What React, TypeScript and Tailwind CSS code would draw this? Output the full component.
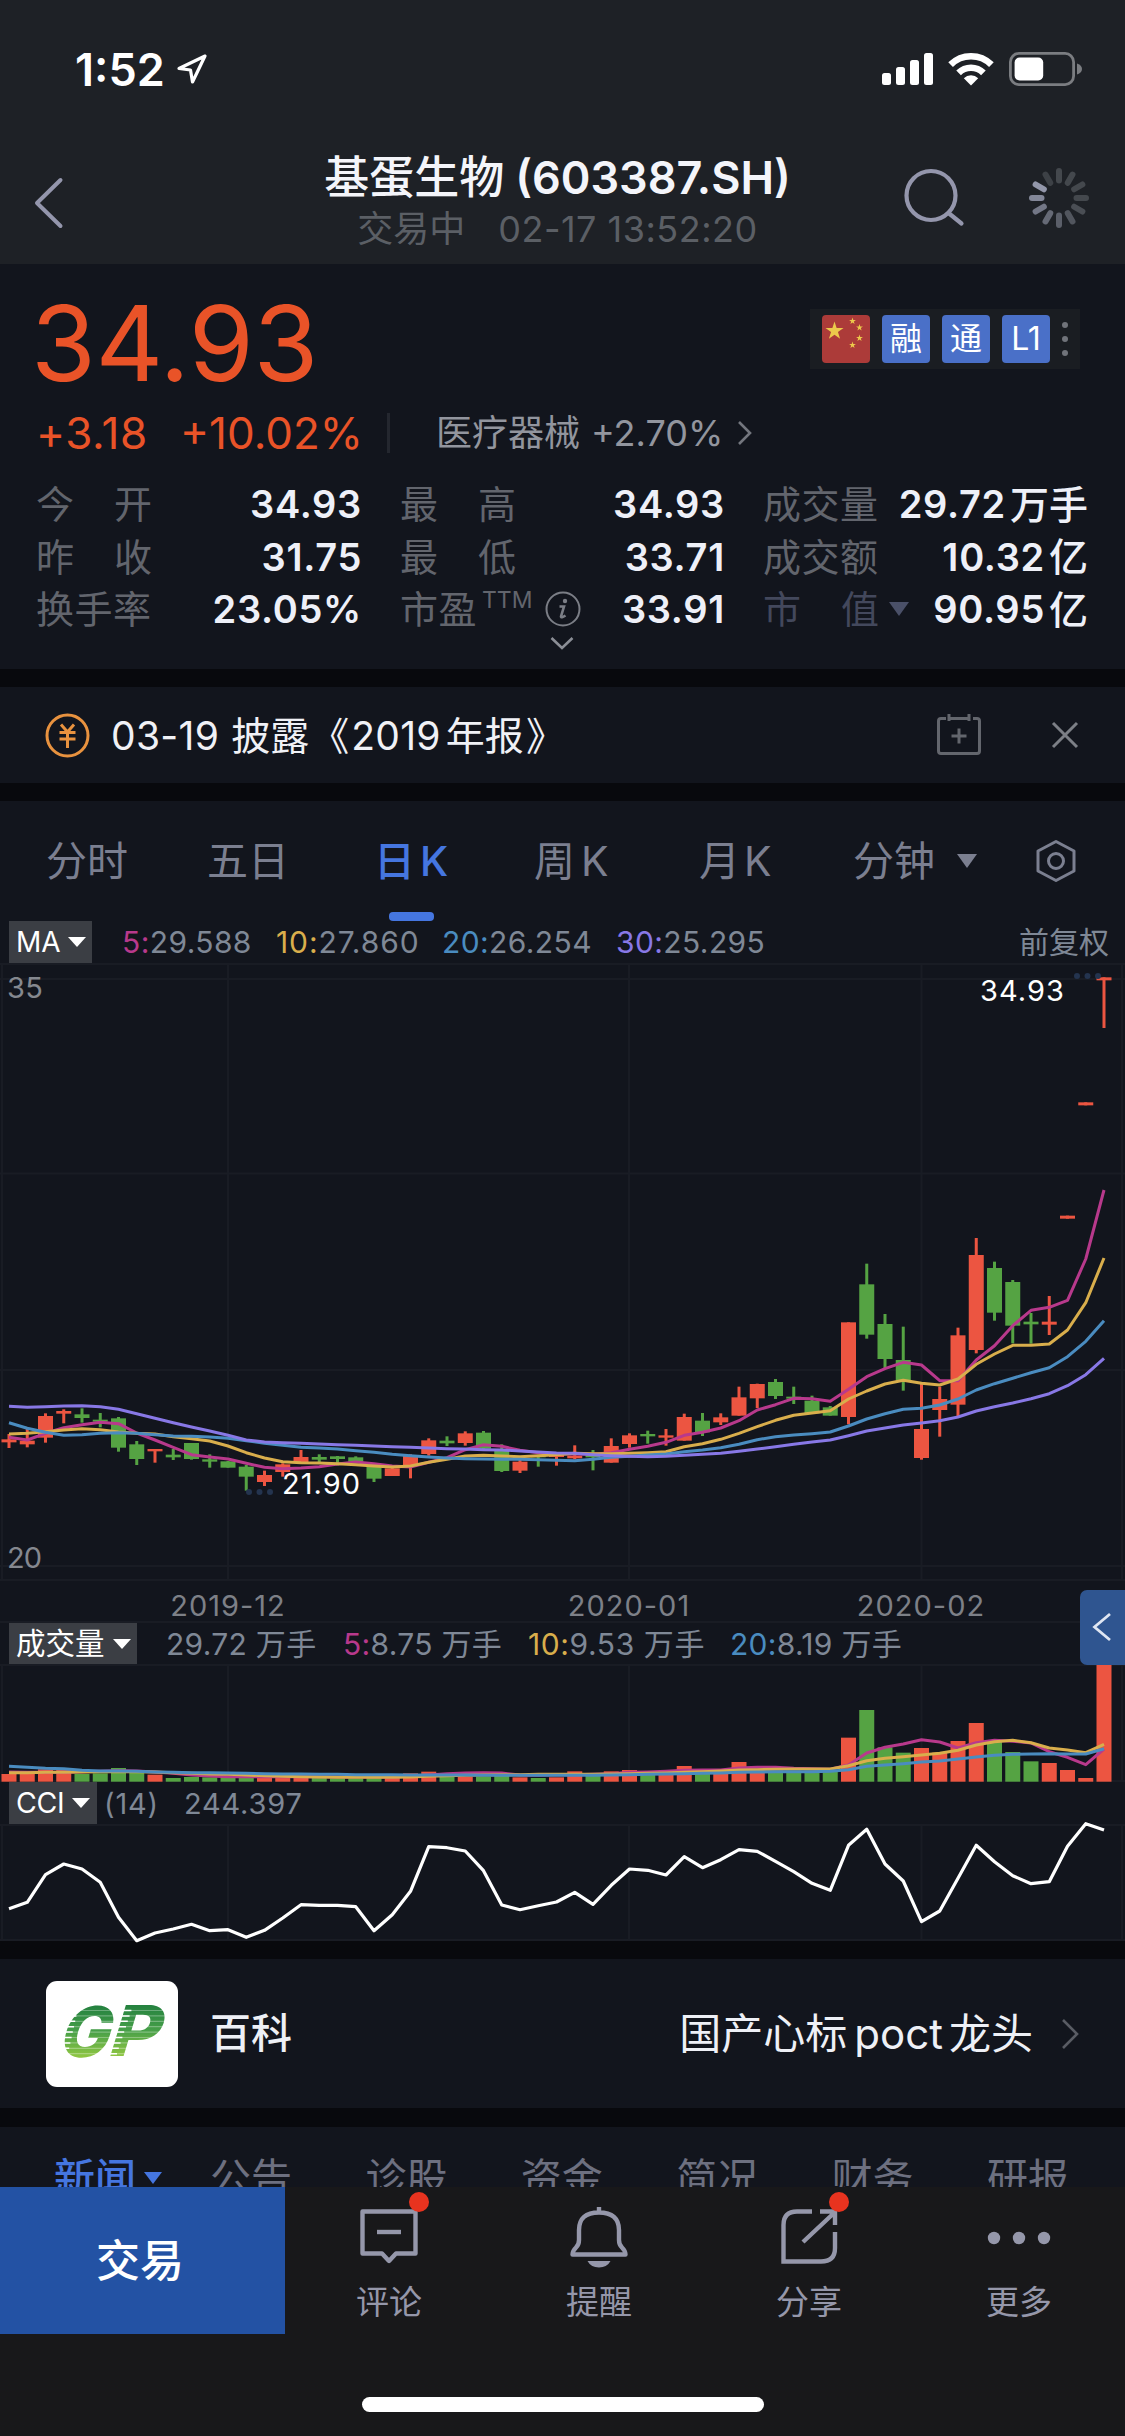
import React from "react";

const FONT = "font-['Inter','Noto_Sans_CJK_SC',sans-serif]";

const RED = "#ec5541";
const GREEN = "#55a343";
const MAGENTA = "#b8398c";
const YELLOW = "#d9ae4c";
const BLUE = "#4a8cc0";
const VIOLET = "#8878e6";

// one trading day every 18.25px
const STEP = 18.25;
const cx = (i: number) => 9 + i * STEP;

// [direction, high, body top, body bottom, low], thirds of a pixel
type Candle = ["r" | "g", number, number, number, number];

const CANDLES: Candle[] = [
  ["r", 312, 328, 337, 354],
  ["r", 292, 332, 343, 352],
  ["r", 250, 258, 323, 338],
  ["r", 238, 243, 251, 280],
  ["g", 235, 253, 264, 278],
  ["g", 249, 269, 275, 292],
  ["g", 261, 265, 353, 365],
  ["g", 333, 343, 387, 405],
  ["r", 357, 357, 364, 398],
  ["g", 357, 374, 382, 390],
  ["g", 339, 339, 387, 389],
  ["g", 373, 388, 395, 413],
  ["g", 393, 394, 413, 413],
  ["g", 405, 410, 440, 482],
  ["r", 422, 435, 456, 468],
  ["r", 400, 403, 426, 440],
  ["r", 360, 381, 396, 396],
  ["g", 373, 381, 389, 397],
  ["g", 378, 379, 387, 406],
  ["g", 379, 382, 395, 395],
  ["g", 410, 411, 446, 456],
  ["r", 414, 415, 438, 438],
  ["r", 373, 375, 408, 445],
  ["r", 325, 331, 372, 377],
  ["g", 319, 332, 340, 348],
  ["r", 304, 310, 339, 347],
  ["g", 303, 308, 356, 360],
  ["g", 343, 360, 423, 426],
  ["r", 390, 395, 422, 429],
  ["g", 375, 377, 382, 410],
  ["r", 374, 375, 381, 407],
  ["r", 346, 377, 385, 388],
  ["g", 360, 376, 382, 421],
  ["r", 325, 348, 398, 398],
  ["r", 310, 316, 342, 353],
  ["g", 302, 312, 319, 341],
  ["r", 297, 316, 323, 347],
  ["r", 251, 261, 332, 332],
  ["g", 249, 272, 307, 318],
  ["r", 250, 262, 277, 285],
  ["r", 170, 202, 257, 257],
  ["r", 161, 162, 205, 234],
  ["g", 147, 156, 198, 207],
  ["g", 170, 200, 206, 222],
  ["g", 197, 212, 250, 250],
  ["g", 228, 232, 257, 257],
  ["r", -23, -23, 261, 283],
  ["g", -199, -137, 14, 26],
  ["g", -48, -18, 87, 114],
  ["g", -10, 90, 152, 182],
  ["r", 158, 297, 384, 389],
  ["r", 170, 207, 240, 320],
  ["r", -7, 16, 224, 259],
  ["r", -276, -225, 60, 70],
  ["g", -205, -186, -52, -28],
  ["g", -150, -144, -13, 40],
  ["g", -51, -25, -17, 41],
  ["r", -102, -25, -16, 15],
  ["r", -343, -343, -334, -334],
  ["r", -683, -683, -674, -674],
  ["r", -1058, -1058, -1049, -906],
];

const MA5 = [
  322, 330, 310, 293, 284, 277, 281, 309, 330, 352, 374, 381, 387, 400, 412, 416, 414, 410, 402, 396,
  401, 408, 411, 397, 383, 359, 344, 349, 361, 368, 372, 372, 373, 368, 358, 349, 337, 316, 307, 294,
  272, 240, 224, 205, 206, 214, 178, 140, 116, 97, 105, 152, 152, 90, 47, -13, -59, -68, -89, -213, -420,
];
const MA10 = [
  312, 310, 305, 300, 296, 299, 306, 310, 312, 320, 326, 333, 348, 368, 384, 395, 398, 399, 401, 404,
  408, 411, 408, 397, 388, 378, 376, 378, 380, 377, 374, 370, 371, 371, 370, 368, 365, 350, 341, 328,
  310, 290, 271, 256, 249, 242, 207, 183, 162, 151, 160, 165, 147, 103, 72, 46, 46, 42, 0, -82, -216,
];
const MA20 = [
  278, 295, 307, 316, 314, 310, 308, 310, 314, 318, 319, 321, 325, 332, 340, 346, 352, 354, 357, 362,
  367, 373, 377, 381, 384, 386, 387, 388, 388, 389, 391, 392, 388, 382, 379, 375, 372, 365, 360, 353,
  343, 329, 320, 315, 311, 306, 288, 267, 251, 238, 235, 225, 207, 180, 161, 145, 128, 113, 80, 34, -28,
];
const MA30 = [
  229, 232, 230, 228, 227, 230, 238, 251, 265, 278, 291, 303, 316, 330, 336, 338, 340, 342, 344, 346,
  348, 350, 352, 354, 356, 357, 359, 360, 363, 366, 369, 370, 374, 377, 379, 380, 379, 376, 373, 370,
  364, 357, 350, 343, 336, 330, 317, 303, 294, 285, 279, 272, 261, 243, 230, 219, 206, 191, 167, 134, 85,
];

const VOLUMES = [
  582, 582, 568, 570, 582, 580, 564, 576, 584, 594, 591, 592, 594, 593, 592, 590, 590, 594, 595, 595,
  594, 592, 580, 575, 590, 590, 590, 588, 592, 594, 592, 574, 586, 574, 570, 584, 580, 558, 580, 580,
  546, 576, 572, 572, 572, 572, 473, 390, 502, 518, 504, 518, 483, 429, 480, 516, 544, 549, 570, 594, 253,
];
const VOL5 = [
  576, 577, 577, 577, 575, 574, 572, 573, 576, 580, 585, 588, 590, 590, 590, 590, 590, 590, 591, 591,
  591, 592, 589, 585, 581, 579, 578, 579, 585, 586, 584, 584, 583, 581, 577, 576, 574, 571, 570, 570,
  564, 562, 562, 565, 566, 568, 555, 519, 502, 492, 479, 486, 504, 488, 481, 484, 489, 515, 532, 554, 507,
];
const VOL10 = [
  578, 578, 577, 577, 576, 575, 575, 575, 576, 578, 580, 582, 583, 585, 587, 589, 590, 591, 592, 592,
  592, 592, 591, 589, 587, 586, 585, 584, 584, 583, 583, 583, 583, 582, 581, 580, 579, 577, 575, 573,
  570, 569, 568, 567, 567, 567, 557, 542, 535, 530, 525, 520, 511, 495, 485, 481, 488, 504, 510, 518, 493,
];
const VOL20 = [
  559, 562, 565, 566, 571, 573, 573, 574, 576, 577, 578, 578, 579, 580, 581, 582, 582, 583, 583, 584,
  584, 584, 585, 585, 585, 585, 586, 586, 586, 586, 586, 586, 586, 585, 584, 583, 582, 581, 580, 579,
  577, 576, 575, 575, 575, 574, 569, 559, 555, 551, 546, 543, 537, 531, 526, 523, 522, 521, 522, 522, 506,
];
const CCI = [
  986, 967, 884, 852, 867, 907, 1012, 1082, 1059, 1047, 1033, 1052, 1049, 1072, 1051, 1014, 974, 976, 976, 980,
  1052, 1004, 934, 800, 803, 813, 872, 975, 989, 977, 966, 937, 973, 916, 867, 871, 885, 830, 863, 839,
  809, 814, 844, 875, 910, 931, 796, 748, 852, 903, 1025, 993, 895, 796, 845, 887, 911, 905, 799, 731, 750,
];

const MONTHS = [228, 629, 921.5];

const line = (values: number[], offset: number) =>
  values.map((v, i) => `${cx(i)},${(offset + v / 3).toFixed(1)}`).join(" ");

function Line({ values, offset, color, width = 3 }: { values: number[]; offset: number; color: string; width?: number }) {
  return <polyline points={line(values, offset)} fill="none" stroke={color} strokeWidth={width} strokeLinejoin="round" />;
}

function Grid({ height, rows = [] }: { height: number; rows?: number[] }) {
  return (
    <g stroke="#191c24" strokeWidth="2">
      {MONTHS.map((x) => (
        <line key={x} x1={x} x2={x} y1={0} y2={height} />
      ))}
      <line x1={2} x2={2} y1={0} y2={height} />
      <line x1={1122} x2={1122} y1={0} y2={height} />
      {rows.map((y) => (
        <line key={y} x1={0} x2={1125} y1={y} y2={y} />
      ))}
    </g>
  );
}

function StatusBar() {
  return (
    <div className="flex h-[138px] items-center text-white">
      <span className="ml-[75px] w-[100px] text-[45px] leading-none font-semibold">1:52</span>
      <svg className="ml-px" width="32" height="32" viewBox="0 0 32 32" fill="none" stroke="white" strokeWidth="3.2" strokeLinejoin="round">
        <path d="M29 3 L3 15.5 L14.5 17 L16.5 29 Z" />
      </svg>
      <svg className="ml-[672px]" width="206" height="36" viewBox="880 51 206 36">
        <g fill="white">
          <rect x="882" y="73" width="9" height="12" rx="2.5" />
          <rect x="896" y="67" width="9" height="18" rx="2.5" />
          <rect x="910" y="60" width="9" height="25" rx="2.5" />
          <rect x="924" y="53" width="9" height="32" rx="2.5" />
          <path d="M971 85.5 L963.8 78.2 A10.4 10.4 0 0 1 978.2 78.2 Z" />
        </g>
        <g fill="none" stroke="white" strokeWidth="6.6">
          <path d="M950.6 64.6 A29 29 0 0 1 991.4 64.6" />
          <path d="M958.6 72.8 A17.6 17.6 0 0 1 983.4 72.8" />
        </g>
        <rect x="1010.4" y="53.4" width="63.2" height="31.2" rx="8.5" fill="none" stroke="#7b7d81" strokeWidth="2.8" />
        <rect x="1014.6" y="57.6" width="28.6" height="22.8" rx="5" fill="white" />
        <path d="M1077 63.5 q5 1.8 5 5.5 t-5 5.5 Z" fill="#7b7d81" />
      </svg>
    </div>
  );
}

const SPOKES = ["#44484d", "#44484d", "#44484d", "#44484d", "#4a4e54", "#52565e", "#5b5f69", "#666a76", "#737786", "#838798", "#9397aa", "#3d4146"];

function TitleBar() {
  return (
    <div className="flex h-[126px] items-start">
      <svg className="mt-[38px] ml-[31px]" width="36" height="54" viewBox="0 0 36 54" fill="none" stroke="#9496ac" strokeWidth="4" strokeLinecap="round" strokeLinejoin="round">
        <path d="M29.500 4 L6 27 L29.500 50" />
      </svg>
      <div className="mt-[16px] ml-[158px] flex w-[665px] flex-col items-center">
        <h1 className="flex h-[46px] items-center text-[44px] leading-none font-medium whitespace-nowrap text-[#f4f5fa]">
          <span className="text-[45px]">基蛋生物</span>
          <span className="ml-[11px] text-[45px] font-semibold">(603387.SH)</span>
        </h1>
        <div className="mt-[8px] flex h-[42px] items-center text-[36px] leading-none whitespace-nowrap text-[#5b5f65]">
          <span>交易中</span>
          <span className="ml-[33px] tracking-[0.5px]">02-17 13:52:20</span>
        </div>
      </div>
      <svg className="mt-[28px] ml-[10px]" width="66" height="66" viewBox="900 166 66 66" fill="none" stroke="#9496ac" strokeWidth="4.2" strokeLinecap="round">
        <circle cx="931" cy="195.500" r="24.500" />
        <path d="M948.500 213 L961.500 223.500" />
      </svg>
      <svg className="mt-[28px] ml-[61px]" width="64" height="64" viewBox="-32 -32 64 64" strokeWidth="6" strokeLinecap="round">
        {SPOKES.map((c, i) => (
          <line key={i} x1="0" y1="-17.500" x2="0" y2="-27" stroke={c} transform={`rotate(${i * 30})`} />
        ))}
      </svg>
    </div>
  );
}

function Flag() {
  const star = "M0 -1 L.225 -.309 L.951 -.309 L.363 .118 L.588 .809 L0 .382 L-.588 .809 L-.363 .118 L-.951 -.309 L-.225 -.309 Z";
  return (
    <svg width="48" height="48" viewBox="0 0 48 48">
      <rect width="48" height="48" rx="4" fill="#ac3b39" />
      <g fill="#ecc94b">
        <path d={star} transform="translate(12.500 16) scale(9.500)" />
        <path d={star} transform="translate(30.500 6) scale(3.600)" />
        <path d={star} transform="translate(37.500 12.500) scale(3.600)" />
        <path d={star} transform="translate(37.500 23) scale(3.600)" />
        <path d={star} transform="translate(30.500 30) scale(3.600)" />
      </g>
    </svg>
  );
}

function Badge({ children }: { children: React.ReactNode }) {
  return <span className="flex size-12 items-center justify-center rounded-[4px] bg-[#4a70c8] text-[32px] leading-none text-white">{children}</span>;
}

function Stat({ label, value, unit, children }: { label: string; value: string; unit?: string; children?: React.ReactNode }) {
  return (
    <div className="flex h-[52.5px] items-center justify-between leading-none whitespace-nowrap">
      <div className="flex items-center text-[38px] text-[#62656d]">
        {label.length === 2 && !children ? (
          <span className="flex w-[116px] justify-between">
            <span>{label[0]}</span>
            <span>{label[1]}</span>
          </span>
        ) : (
          <span className="tracking-[0.5px]">{label}</span>
        )}
        {children}
      </div>
      <div className="flex items-center text-[38px] font-semibold text-[#eef0f8]">
        <span className="tracking-[0.7px]">{value}</span>
        {unit && <span className="ml-[4px] text-[39px] font-medium">{unit}</span>}
      </div>
    </div>
  );
}

function Quote() {
  return (
    <section className="h-[405px] bg-[#12151d] pl-[36px]">
      <div className="flex h-[130px] items-start justify-between">
        <span className="mt-[26px] ml-[-5px] text-[105px] leading-none tracking-[-0.3px] text-[#e95328]">34.93</span>
        <div className="mt-[45px] mr-[45px] flex h-[60px] w-[270px] items-center gap-3 bg-[#1a1d22] pl-3">
          <Flag />
          <Badge>融</Badge>
          <Badge>通</Badge>
          <Badge>L1</Badge>
          <svg className="-ml-1" width="14" height="40" viewBox="0 0 14 40" fill="#70737a">
            <circle cx="7" cy="6" r="3" />
            <circle cx="7" cy="20" r="3" />
            <circle cx="7" cy="34" r="3" />
          </svg>
        </div>
      </div>
      <div className="flex h-[78px] items-center leading-none whitespace-nowrap">
        <span className="w-[144px] text-[44px] tracking-[0.6px] text-[#e95328]">+3.18</span>
        <span className="w-[207px] text-[44px] text-[#e95328]">+10.02%</span>
        <span className="h-[40px] w-[3px] bg-[#24272f]" />
        <span className="ml-[46px] text-[36px] text-[#92959e]">医疗器械</span>
        <span className="ml-[11px] text-[36px] text-[#92959e]">+2.70%</span>
        <svg className="ml-[12px]" width="20" height="28" viewBox="0 0 20 28" fill="none" stroke="#73767e" strokeWidth="2.600">
          <path d="M4 3 L15 14 L4 25" />
        </svg>
      </div>
      <div className="mt-[6px] grid grid-cols-[326px_325px_325px] gap-x-[38px]">
        <Stat label="今开" value="34.93" />
        <Stat label="最高" value="34.93" />
        <Stat label="成交量" value="29.72" unit="万手" />
        <Stat label="昨收" value="31.75" />
        <Stat label="最低" value="33.71" />
        <Stat label="成交额" value="10.32" unit="亿" />
        <Stat label="换手率" value="23.05%" />
        <Stat label="市盈" value="33.91">
          <span className="mb-[18px] ml-[5px] text-[23px]">TTM</span>
          <svg className="ml-[12px]" width="36" height="36" viewBox="0 0 36 36" fill="none" stroke="#7b7e86">
            <circle cx="18" cy="18" r="16.500" strokeWidth="2" />
            <circle cx="20" cy="10" r="2.200" fill="#7b7e86" stroke="none" />
            <path d="M14.500 15.500 H19 L16 25.500 Q16 27.500 20.500 24.500" strokeWidth="2.600" />
          </svg>
        </Stat>
        <Stat label="" value="90.95" unit="亿">
          <span className="flex w-[116px] justify-between text-[#43485c]">
            <span>市</span>
            <span>值</span>
          </span>
          <svg className="ml-[10px]" width="20" height="14" viewBox="0 0 20 14" fill="#4a5068">
            <path d="M0 0 H20 L10 14 Z" />
          </svg>
        </Stat>
      </div>
      <svg className="-mt-px ml-[512px]" width="28" height="16" viewBox="0 0 28 16" fill="none" stroke="#8b8e96" strokeWidth="2.600">
        <path d="M3.500 3 L14 13 L24.500 3" />
      </svg>
    </section>
  );
}

function Notice() {
  return (
    <section className="flex h-[96px] items-center bg-[#12151d] leading-none">
      <svg className="ml-[45px]" width="45" height="45" viewBox="0 0 45 45" fill="none" stroke="#e8923f" strokeWidth="3">
        <circle cx="22.500" cy="22.500" r="20.500" />
        <path d="M16 11.500 L22.500 19 L29 11.500 M14.500 19.500 H30.500 M14.500 26 H30.500 M22.500 19 V35" />
      </svg>
      <p className="ml-[21px] flex items-center text-[39px] whitespace-nowrap text-[#f0f1f6]">
        <span className="tracking-[0.3px]">03-19</span>
        <span className="ml-[12px]">披露</span>
        <span className="ml-px">《</span>
        <span className="ml-[2px] tracking-[0.3px]">2019</span>
        <span className="ml-[5px]">年报</span>
        <span className="ml-[2px]">》</span>
      </p>
      <svg className="ml-auto" width="46" height="46" viewBox="0 0 46 46" fill="none" stroke="#63666d" strokeWidth="3">
        <path d="M10 6.500 H5 Q2.500 6.500 2.500 9 V39 Q2.500 41.500 5 41.500 H41 Q43.500 41.500 43.500 39 V9 Q43.500 6.500 41 6.500 H37" />
        <path d="M13 2 V9 M33 2 V9 M13 6.500 H33 M23 16.500 V31.500 M15.500 24 H30.500" />
      </svg>
      <svg className="mr-[45px] ml-[68px]" width="30" height="30" viewBox="0 0 30 30" fill="none" stroke="#7c7f86" strokeWidth="3">
        <path d="M3 3 L27 27 M27 3 L3 27" />
      </svg>
    </section>
  );
}

function ChartTabs() {
  return (
    <div className="flex h-[120px] items-center text-[41px] leading-none whitespace-nowrap text-[#7b7f90]">
      <span className="ml-[46px] w-[161px]">分时</span>
      <span className="w-[167px]">五日</span>
      <span className="relative flex h-full w-[160px] items-center font-medium text-[#4576e0]">
        日<span className="ml-[5px]">K</span>
        <i className="absolute bottom-0 left-[15px] h-[9px] w-[45px] rounded-[4px] bg-[#4576e0]" />
      </span>
      <span className="flex w-[165px] items-center">
        周<span className="ml-[6px]">K</span>
      </span>
      <span className="flex w-[154px] items-center">
        月<span className="ml-[4px]">K</span>
      </span>
      <span>分钟</span>
      <svg className="ml-[22px]" width="20" height="14" viewBox="0 0 20 14" fill="#7b7f90">
        <path d="M0 0 H20 L10 14 Z" />
      </svg>
      <svg className="ml-[58px]" width="42" height="44" viewBox="0 0 42 44" fill="none" stroke="#7b7f90" strokeWidth="3">
        <path d="M21 2.500 L39 12 V32 L21 41.500 L3 32 V12 Z" strokeLinejoin="round" />
        <circle cx="21" cy="22" r="7.500" />
      </svg>
    </div>
  );
}

function Selector({ label, className }: { label: string; className: string }) {
  return (
    <span className={`ml-[9px] flex h-full items-center bg-[#3b3e44] pl-[7px] text-white ${className}`}>
      {label}
      <svg className="ml-auto" width="18" height="10" viewBox="0 0 18 10" fill="white">
        <path d="M0 0 H18 L9 10 Z" />
      </svg>
    </span>
  );
}

function Avg({ n, value, color, className }: { n: string; value: string; color: string; className: string }) {
  return (
    <span className={className}>
      <span style={{ color }}>{n}:</span>
      {value}
    </span>
  );
}

function PriceChart() {
  const base = 367;
  return (
    <svg className="block" width="1125" height="618" viewBox="0 0 1125 618">
      <Grid height={618} rows={[1, 16, 210.500, 407, 603, 617]} />
      {CANDLES.map(([dir, high, top, bottom, low], i) => (
        <g key={i} fill={dir === "r" ? RED : GREEN}>
          <rect x={cx(i) - 1.5} y={base + high / 3} width={3} height={(low - high) / 3} />
          <rect x={cx(i) - 7.5} y={base + top / 3} width={15} height={(bottom - top) / 3} />
        </g>
      ))}
      <Line values={MA5} offset={base} color={MAGENTA} />
      <Line values={MA10} offset={base} color={YELLOW} />
      <Line values={MA20} offset={base} color={BLUE} />
      <Line values={MA30} offset={base} color={VIOLET} />
      <g fill="#24344f">
        {[249, 259.5, 270].map((x) => (
          <circle key={x} cx={x} cy={529} r={3} />
        ))}
        {[1077, 1087.5, 1098].map((x) => (
          <circle key={x} cx={x} cy={13} r={3} />
        ))}
      </g>
      <g className={`${FONT} text-[29px]`}>
        <text x="7" y="35" fill="#85888f" textLength="36">35</text>
        <text x="7" y="605" fill="#85888f" textLength="35">20</text>
        <text x="980" y="37.500" fill="white" textLength="84">34.93</text>
        <text x="282" y="531" fill="white" textLength="78">21.90</text>
      </g>
    </svg>
  );
}

function VolumeChart() {
  const base = -84;
  const floor = 117.7;
  return (
    <svg className="block" width="1125" height="118" viewBox="0 0 1125 118">
      <Grid height={118} rows={[1, 117]} />
      {VOLUMES.map((v, i) => (
        <rect key={i} x={cx(i) - 7.5} y={base + v / 3} width={15} height={floor - base - v / 3} fill={CANDLES[i][0] === "r" ? RED : GREEN} />
      ))}
      <Line values={VOL5} offset={base} color={MAGENTA} />
      <Line values={VOL10} offset={base} color={YELLOW} />
      <Line values={VOL20} offset={base} color={BLUE} />
    </svg>
  );
}

function CciChart() {
  return (
    <svg className="block overflow-visible" width="1125" height="117" viewBox="0 0 1125 117">
      <Grid height={117} rows={[1, 116]} />
      <Line values={CCI} offset={-244} color="#ffffff" width={3.2} />
    </svg>
  );
}

function Chart() {
  return (
    <section className="relative h-[1140px] bg-[#12151d] text-[30px] leading-none whitespace-nowrap text-[#7f8896]">
      <ChartTabs />
      <div className="flex h-[42px] items-center tracking-[0.4px]">
        <Selector label="MA" className="w-[83px] pr-[6px] text-[28px] tracking-normal" />
        <Avg n="5" value="29.588" color={MAGENTA} className="ml-[30px] w-[154px]" />
        <Avg n="10" value="27.860" color={YELLOW} className="w-[166px] tracking-[0.9px]" />
        <Avg n="20" value="26.254" color={BLUE} className="w-[174px]" />
        <Avg n="30" value="25.295" color={VIOLET} className="" />
        <span className="mr-[16px] ml-auto tracking-normal">前复权</span>
      </div>
      <PriceChart />
      <div className="flex h-[42px] items-center border-b-2 border-[#191c24] pt-[8px] text-[29px] tracking-[1px] text-[#7d8087]">
        <span className="ml-[128px] w-[200px] text-center">2019-12</span>
        <span className="ml-[201px] w-[200px] text-center">2020-01</span>
        <span className="ml-[92px] w-[200px] text-center">2020-02</span>
      </div>
      <div className="flex h-[41px] items-center tracking-[0.3px]">
        <Selector label="成交量" className="w-[128px] pr-[6px] text-[29.5px] tracking-normal" />
        <span className="ml-[29px] w-[177px]">29.72 万手</span>
        <Avg n="5" value="8.75 万手" color={MAGENTA} className="w-[185px]" />
        <Avg n="10" value="9.53 万手" color={YELLOW} className="w-[202px] tracking-[0.6px]" />
        <Avg n="20" value="8.19 万手" color={BLUE} className="" />
      </div>
      <VolumeChart />
      <div className="flex h-[42px] items-center text-[29px] tracking-[0.8px]">
        <Selector label="CCI" className="w-[88px] pr-[7px] text-[28.5px] tracking-[-0.3px]" />
        <span className="ml-[7px] w-[80px]">(14)</span>
        <span>244.397</span>
      </div>
      <CciChart />
      <button className="absolute top-[789px] right-0 flex h-[75px] w-[45px] items-center justify-center rounded-l-[7px] bg-[#2f5590] pr-[2px] pb-[2px]">
        <svg width="24" height="32" viewBox="0 0 24 32" fill="none" stroke="#dfe6f2" strokeWidth="2.800">
          <path d="M20 3 L4.500 16 L20 29" />
        </svg>
      </button>
    </section>
  );
}

function Wiki() {
  return (
    <section className="flex h-[149px] items-center bg-[#12151d] text-[41px] leading-none whitespace-nowrap text-[#eef0f6]">
      <svg className="ml-[46px]" width="132" height="106" viewBox="0 0 132 106">
        <defs>
          <linearGradient id="leaf" gradientUnits="userSpaceOnUse" x1="0" y1="-52" x2="0" y2="0">
            <stop offset="0" stopColor="#23803f" />
            <stop offset="0.500" stopColor="#469f48" />
            <stop offset="1" stopColor="#8fc642" />
          </linearGradient>
        </defs>
        <rect width="132" height="106" rx="11" fill="white" />
        <g className={`${FONT} text-[70px] font-extrabold`} fill="url(#leaf)">
          <text transform="translate(10 76) skewX(-17)" textLength="50" lengthAdjust="spacingAndGlyphs">G</text>
          <text transform="translate(60 75) skewX(-17)" textLength="50" lengthAdjust="spacingAndGlyphs">P</text>
        </g>
        {/* speed lines cut into the left side of both letters */}
        <g stroke="white" strokeWidth="1.500">
          {[0, 1, 2, 3, 4, 5, 6, 7, 8].map((n) => (
            <path key={n} d={`M${10 + (8 - n) * 1.2} ${29.5 + n * 5.4} h12 M${60 + (8 - n) * 1.8} ${29.5 + n * 5.4} h11`} />
          ))}
        </g>
        <g stroke="white" strokeOpacity="0.300" strokeWidth="1.200">
          {[0, 1, 2, 3, 4, 5, 6, 7, 8].map((n) => (
            <path key={n} d={`M20 ${29.5 + n * 5.4} H122`} />
          ))}
        </g>
      </svg>
      <span className="ml-[32px] font-medium">百科</span>
      <span className="ml-auto flex items-center text-[42px]">
        国产心标<span className="ml-[7px] text-[42px]">poct</span>
        <span className="ml-[6px]">龙头</span>
      </span>
      <svg className="mr-[44px] ml-[26px]" width="22" height="34" viewBox="0 0 22 34" fill="none" stroke="#595c64" strokeWidth="2.600">
        <path d="M4 3 L18 17 L4 31" />
      </svg>
    </section>
  );
}

const NEWS_TABS = ["公告", "诊股", "资金", "简况", "财务", "研报"];

function NewsTabs() {
  return (
    <section className="h-[60px] overflow-hidden bg-[#12151d]">
      <div className="flex h-[102px] items-center text-[41px] leading-none whitespace-nowrap text-[#6d7080]">
        <span className="ml-[54px] flex w-[156px] shrink-0 items-center font-medium text-[#4576e0]">
          新闻
          <svg className="ml-[8px]" width="18" height="12" viewBox="0 0 18 12" fill="#4576e0">
            <path d="M0 0 H18 L9 12 Z" />
          </svg>
        </span>
        {NEWS_TABS.map((t) => (
          <span key={t} className="w-[155.4px] shrink-0">{t}</span>
        ))}
      </div>
    </section>
  );
}

function Action({ label, dot, children }: { label: string; dot?: boolean; children: React.ReactNode }) {
  return (
    <div className="relative flex w-[210px] flex-col items-center pt-[16px] text-[33px] leading-none text-[#9597aa]">
      <svg width="64" height="66" viewBox="0 0 64 66" fill="none" stroke="#9597aa" strokeWidth="4.400">
        {children}
      </svg>
      <span className="mt-[17px]">{label}</span>
      {dot && <i className="absolute top-[5px] left-[125px] size-5 rounded-full bg-[#e8331f]" />}
    </div>
  );
}

function BottomBar() {
  return (
    <footer className="h-[249px] bg-[#18181a]">
      <div className="flex h-[147px]">
        <button className="flex w-[285px] items-center justify-center bg-[#2352a4] pr-[5px] text-[44px] leading-none font-medium text-white">交易</button>
        <div className="flex -translate-x-px">
          <Action label="评论" dot>
            <path d="M5.500 8.500 H58.500 V50.500 H39 L32 58 L25 50.500 H5.500 Z" strokeLinejoin="round" />
            <path d="M20 29 H44" />
          </Action>
          <Action label="提醒">
            <path d="M32 4 V9 M5.500 51.500 H58.500 Q58.500 48 55 44.500 Q52 42 52 37 V27 Q52 9.500 32 9.500 Q12 9.500 12 27 V37 Q12 42 9 44.500 Q5.500 48 5.500 51.500 Z" strokeLinejoin="round" />
            <path d="M20.500 58 H43.500 Q40 64.500 32 64.500 Q24 64.500 20.500 58 Z" fill="#9597aa" stroke="none" />
          </Action>
          <Action label="分享" dot>
            <path d="M35 8.500 H20 Q6.500 8.500 6.500 22 V58.500 H44 Q58 58.500 58 45 V29" />
            <path d="M43 8.500 H58 V22 M57 10 L26 39" />
          </Action>
          <Action label="更多">
            <g fill="#9597aa" stroke="none">
              <circle cx="7" cy="35" r="6.200" />
              <circle cx="32" cy="35" r="6.200" />
              <circle cx="57" cy="35" r="6.200" />
            </g>
          </Action>
        </div>
      </div>
      <div className="mt-[63px] ml-[362px] h-[15px] w-[402px] rounded-full bg-white" />
    </footer>
  );
}

export default function App() {
  return (
    <main className={`flex h-[2436px] w-[1125px] flex-col overflow-hidden bg-[#08090d] ${FONT}`}>
      <header className="h-[264px] bg-[#1e2126]">
        <StatusBar />
        <TitleBar />
      </header>
      <Quote />
      <div className="h-[18px]" />
      <Notice />
      <div className="h-[18px]" />
      <Chart />
      <div className="h-[18px]" />
      <Wiki />
      <div className="h-[19px]" />
      <NewsTabs />
      <BottomBar />
    </main>
  );
}
